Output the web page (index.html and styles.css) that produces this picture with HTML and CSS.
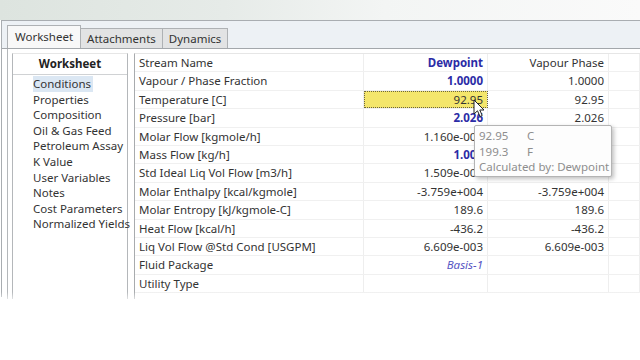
FILE: index.html
```html
<!DOCTYPE html>
<html lang="en">
<head>
    <meta charset="UTF-8">
    <meta name="viewport" content="width=device-width, initial-scale=1.0">
    <title>Stream Worksheet</title>
    <link rel="stylesheet" href="styles.css">
</head>
<body>

    <div class="top-strip"></div>

    <div class="window">
        <!-- Tabs -->
        <div class="tabs">
            <div class="tab active">Worksheet</div>
            <div class="tab">Attachments</div>
            <div class="tab">Dynamics</div>
        </div>

        <div class="page">
            <!-- Left navigation -->
            <div class="nav">
                <div class="nav-title">Worksheet</div>
                <ul class="nav-list">
                    <li class="selected">Conditions</li>
                    <li>Properties</li>
                    <li>Composition</li>
                    <li>Oil &amp; Gas Feed</li>
                    <li>Petroleum Assay</li>
                    <li>K Value</li>
                    <li>User Variables</li>
                    <li>Notes</li>
                    <li>Cost Parameters</li>
                    <li>Normalized Yields</li>
                </ul>
            </div>

            <!-- Conditions grid -->
            <div class="sheet">
                <div class="row">
                    <div class="cell label">Stream Name</div>
                    <div class="cell num spec">Dewpoint</div>
                    <div class="cell num">Vapour Phase</div>
                    <div class="cell"></div>
                </div>
                <div class="row">
                    <div class="cell label">Vapour / Phase Fraction</div>
                    <div class="cell num spec">1.0000</div>
                    <div class="cell num">1.0000</div>
                    <div class="cell"></div>
                </div>
                <div class="row">
                    <div class="cell label">Temperature [C]</div>
                    <div class="cell num current">92.95</div>
                    <div class="cell num">92.95</div>
                    <div class="cell"></div>
                </div>
                <div class="row">
                    <div class="cell label">Pressure [bar]</div>
                    <div class="cell num spec">2.026</div>
                    <div class="cell num">2.026</div>
                    <div class="cell"></div>
                </div>
                <div class="row">
                    <div class="cell label">Molar Flow [kgmole/h]</div>
                    <div class="cell num">1.160e-002</div>
                    <div class="cell num">1.160e-002</div>
                    <div class="cell"></div>
                </div>
                <div class="row">
                    <div class="cell label">Mass Flow [kg/h]</div>
                    <div class="cell num spec">1.000</div>
                    <div class="cell num">1.000</div>
                    <div class="cell"></div>
                </div>
                <div class="row">
                    <div class="cell label">Std Ideal Liq Vol Flow [m3/h]</div>
                    <div class="cell num">1.509e-003</div>
                    <div class="cell num">1.509e-003</div>
                    <div class="cell"></div>
                </div>
                <div class="row">
                    <div class="cell label">Molar Enthalpy [kcal/kgmole]</div>
                    <div class="cell num">-3.759e+004</div>
                    <div class="cell num">-3.759e+004</div>
                    <div class="cell"></div>
                </div>
                <div class="row">
                    <div class="cell label">Molar Entropy [kJ/kgmole-C]</div>
                    <div class="cell num">189.6</div>
                    <div class="cell num">189.6</div>
                    <div class="cell"></div>
                </div>
                <div class="row">
                    <div class="cell label">Heat Flow [kcal/h]</div>
                    <div class="cell num">-436.2</div>
                    <div class="cell num">-436.2</div>
                    <div class="cell"></div>
                </div>
                <div class="row">
                    <div class="cell label">Liq Vol Flow @Std Cond [USGPM]</div>
                    <div class="cell num">6.609e-003</div>
                    <div class="cell num">6.609e-003</div>
                    <div class="cell"></div>
                </div>
                <div class="row">
                    <div class="cell label">Fluid Package</div>
                    <div class="cell num basis">Basis-1</div>
                    <div class="cell"></div>
                    <div class="cell"></div>
                </div>
                <div class="row">
                    <div class="cell label">Utility Type</div>
                    <div class="cell"></div>
                    <div class="cell"></div>
                    <div class="cell"></div>
                </div>
            </div>
        </div>
    </div>

    <!-- Tooltip over the temperature cell -->
    <div class="tooltip">
        <div class="tip-line"><span class="tip-val">92.95</span><span>C</span></div>
        <div class="tip-line"><span class="tip-val">199.3</span><span>F</span></div>
        <div class="tip-line">Calculated by: Dewpoint</div>
    </div>

    <!-- Mouse pointer -->
    <svg class="cursor" width="12" height="19" viewBox="0 0 12 19">
        <path d="M1 1 L1 15 L4.5 11.8 L7 17.5 L9.2 16.5 L6.8 11 L11 11 Z" fill="#fff" stroke="#222" stroke-width="1" stroke-linejoin="round"/>
    </svg>

    <div class="fade"></div>

</body>
</html>
```

FILE: styles.css
```css
body {
    margin: 0;
    width: 640px;
    height: 360px;
    overflow: hidden;
    background-color: #fff;
    font-family: "Noto Sans", "Open Sans", sans-serif;
    font-size: 11.5px;
    color: #333;
    position: relative;
}

.top-strip {
    height: 20px;
    background: linear-gradient(to right, #dde4df 0%, #e6ebe8 35%, #f3f5f4 60%, #fafafa 100%);
}

.window {
    border-top: 1px solid #a9adb1;
    border-left: 1px solid #a9adb1;
    margin-left: 1px;
    height: 276px;
    background-color: #fff;
}

/* Tabs */
.tabs {
    display: flex;
    align-items: flex-end;
    height: 27px;
    padding-left: 5px;
    background-color: #edf1f5;
    border-bottom: 1px solid #a3a7ab;
}

.tab {
    height: 19px;
    line-height: 19px;
    padding: 0 6px;
    background-color: #e2e3e4;
    border: 1px solid #aeb1b4;
    border-bottom: none;
    margin-right: -1px;
    color: #333;
}

.tab.active {
    height: 22px;
    line-height: 22px;
    background-color: #f8f8f8;
    padding: 0 7px;
    position: relative;
    z-index: 1;
}

/* Page */
.page {
    display: flex;
    gap: 6px;
    height: 246px;
    margin-left: 5px;
    padding: 4px 0 0 4px;
    border-left: 1px solid #b4b7ba;
}

.nav {
    width: 114px;
    border-left: 1px solid #b4b7ba;
    border-right: 1px solid #b4b7ba;
    border-top: 1px solid #e6e6e6;
}

.nav-title {
    height: 20px;
    line-height: 20px;
    text-align: center;
    font-weight: bold;
    color: #222;
    border-bottom: 1px solid #d0d2d4;
}

.nav-list {
    list-style: none;
    margin: 0;
    padding: 1px 0 0 20px;
}

.nav-list li {
    height: 15.6px;
    line-height: 15.6px;
    white-space: nowrap;
}

.nav-list li.selected {
    background-color: #dbe7f3;
    display: inline-block;
    padding-right: 2px;
}

.sheet {
    flex: 1;
    border-left: 1px solid #a8abae;
    border-top: 1px solid #e6e6e6;
}

.row {
    display: grid;
    grid-template-columns: 229px 124px 121px 1fr;
    height: 18.4px;
    border-bottom: 1px solid #f0f0f0;
    box-sizing: border-box;
}

.cell {
    line-height: 17.4px;
    padding: 0 4px;
    border-right: 1px solid #eeeeee;
    white-space: nowrap;
    overflow: hidden;
}

.cell.num {
    text-align: right;
}

.cell.spec {
    color: #2b2ba6;
    font-weight: bold;
}

.cell.basis {
    color: #5656c4;
    font-style: italic;
}

.cell.current {
    background-color: #f4e66c;
    outline: 1px dotted #6b6440;
    outline-offset: -1px;
}

/* Tooltip */
.tooltip {
    position: absolute;
    left: 474px;
    top: 125px;
    width: 128px;
    height: 46px;
    padding: 2px 4px;
    background-color: #fdfdfd;
    border: 1px solid #b4b4b4;
    border-radius: 2px;
    box-shadow: 2px 2px 4px rgba(0, 0, 0, 0.25);
    color: #8e8e8e;
    font-size: 11.5px;
}

.tip-line {
    height: 15.6px;
    line-height: 15.6px;
    white-space: nowrap;
}

.tip-val {
    display: inline-block;
    width: 48px;
}

.cursor {
    position: absolute;
    left: 473px;
    top: 99px;
}

.fade {
    position: absolute;
    left: 0;
    top: 292px;
    width: 640px;
    height: 12px;
    background: linear-gradient(to bottom, rgba(255, 255, 255, 0), #fff);
}
```
